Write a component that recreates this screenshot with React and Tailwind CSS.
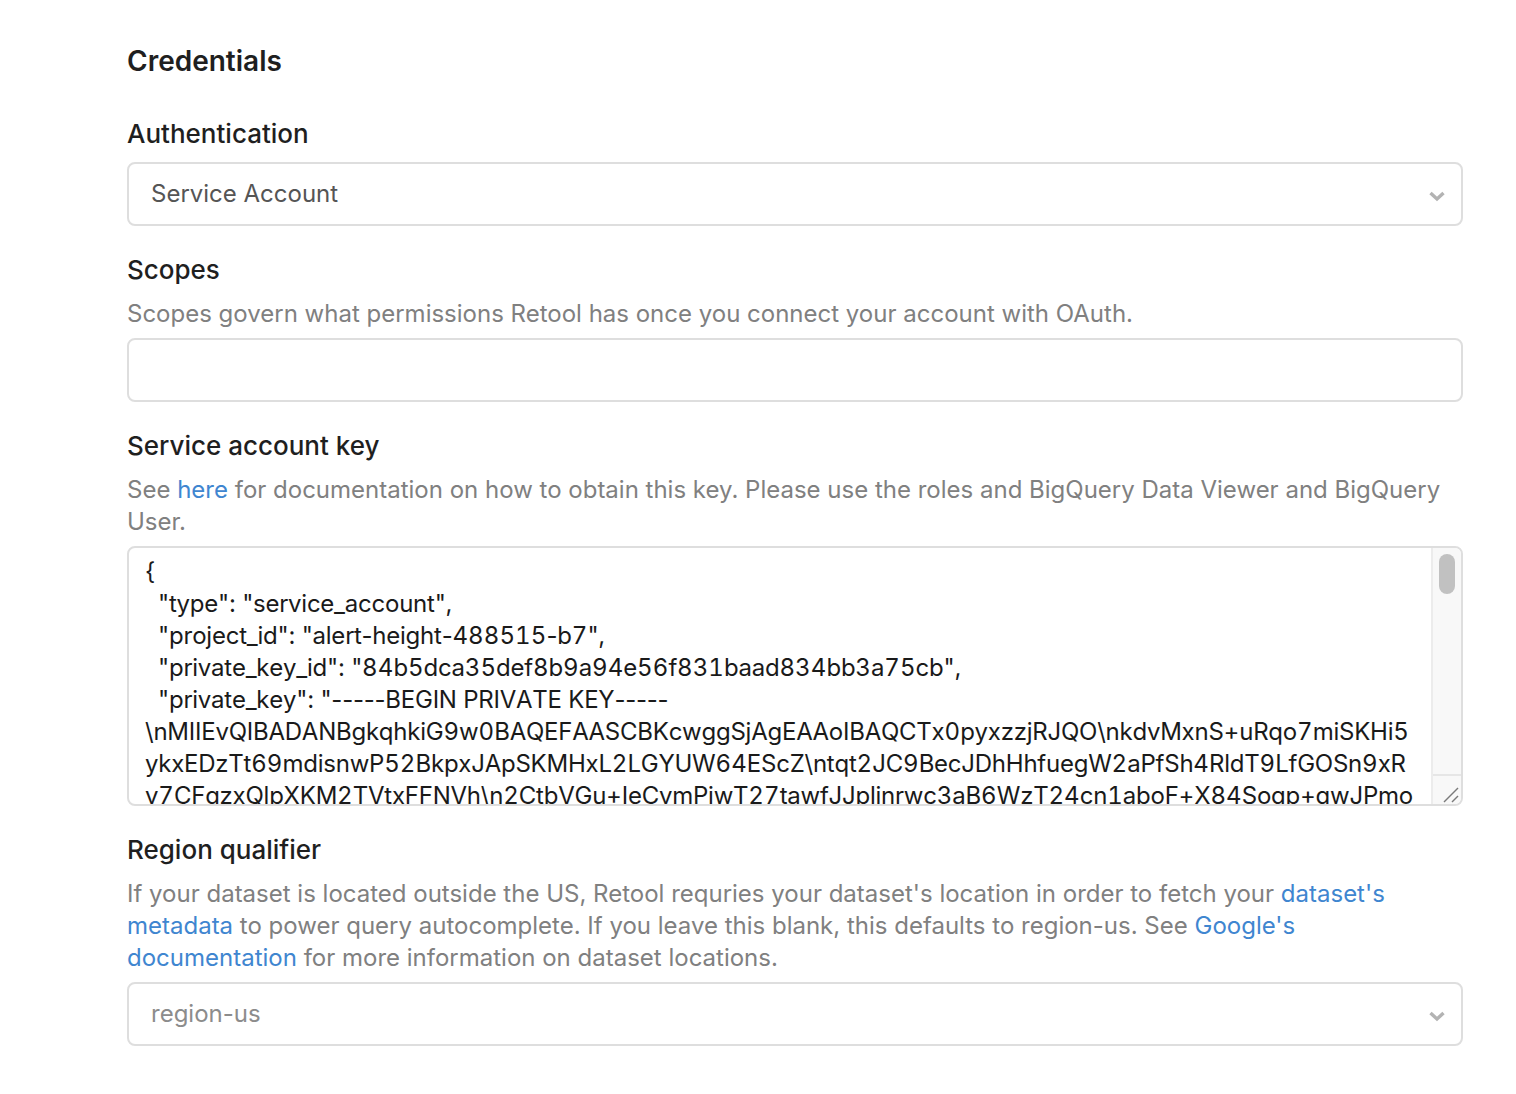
import React from "react";

const keyLines = [
  "{",
  '  "type": "service_account",',
  '  "project_id": "alert-height-488515-b7",',
  '  "private_key_id": "84b5dca35def8b9a94e56f831baad834bb3a75cb",',
  '  "private_key": "-----BEGIN PRIVATE KEY-----',
  "\\nMIIEvQIBADANBgkqhkiG9w0BAQEFAASCBKcwggSjAgEAAoIBAQCTx0pyxzzjRJQO\\nkdvMxnS+uRqo7miSKHi5",
  "ykxEDzTt69mdisnwP52BkpxJApSKMHxL2LGYUW64EScZ\\ntqt2JC9BecJDhHhfuegW2aPfSh4RldT9LfGOSn9xR",
  "v7CFqzxQlpXKM2TVtxFFNVh\\n2CtbVGu+IeCvmPjwT27tawfJJplinrwc3aB6WzT24cn1aboF+X84Soqp+qwJPmo",
];

// digits in the key are wider than the rest of the text
const KeyLine = ({ line }) => (
  <div className="whitespace-pre tracking-[-0.24px] [font-kerning:none]">
    {line.split(/(\d+)/).map((part, i) =>
      i % 2 ? (
        <span key={i} className="tabular-nums tracking-[0.1px]">{part}</span>
      ) : (
        part
      )
    )}
  </div>
);

const Select = ({ value, muted }) => (
  <div className="flex h-[64px] items-center justify-between rounded-[8px] border-2 border-[#dedede] pl-[22px] pr-[16px]">
    <span className={muted ? "text-[#8c8c8c]" : "text-[#555555]"}>{value}</span>
    <svg className="mt-[4px]" width="16" height="11" viewBox="0 0 16 11" fill="none" stroke="#b3b3b3" strokeWidth="3.4">
      <path d="M1.5 2 L8 8 L14.5 2" />
    </svg>
  </div>
);

const Label = ({ children }) => (
  <div className="text-[26px] leading-[32px] font-[450] text-[#1f1f1f]">{children}</div>
);

const Help = ({ children }) => (
  <div className="text-[24px] leading-[32px] text-[#808080]">{children}</div>
);

const A = ({ children }) => <a className="text-[#3f86d0]">{children}</a>;

export default function App() {
  return (
    <div className="min-h-[1094px] bg-white pl-[127px] pr-[53px] pt-[45px] font-['Inter',sans-serif] text-[24px] leading-[32px]">
      <h1 className="text-[28px] leading-[32px] font-semibold text-[#1f1f1f]">Credentials</h1>

      <div className="mt-[41px]">
        <Label>Authentication</Label>
        <div className="mt-[12px]">
          <Select value="Service Account" />
        </div>
      </div>

      <div className="mt-[28px]">
        <Label>Scopes</Label>
        <div className="mt-[12px]">
          <Help>Scopes govern what permissions Retool has once you connect your account with OAuth.</Help>
        </div>
        <div className="mt-[8px] h-[64px] rounded-[8px] border-2 border-[#dedede]" />
      </div>

      <div className="mt-[28px]">
        <Label>Service account key</Label>
        <div className="mt-[12px]">
          <Help>
            See <A>here</A> for documentation on how to obtain this key. Please use the roles and BigQuery Data Viewer and BigQuery User.
          </Help>
        </div>
        <div className="relative mt-[8px] flex h-[260px] overflow-hidden rounded-[8px] border-2 border-[#dedede]">
          <div className="min-w-0 flex-1 overflow-hidden pl-[16px] pt-[8px] text-[#1a1a1a]">
            {keyLines.map((line, i) => (
              <KeyLine key={i} line={line} />
            ))}
          </div>
          <div className="flex w-[30px] shrink-0 flex-col border-l-2 border-[#ececec] bg-[#f8f8f8]">
            <div className="mx-auto mt-[6px] h-[40px] w-[16px] rounded-full bg-[#c1c1c1]" />
            <div className="mt-auto flex h-[30px] items-end justify-end border-t-2 border-[#e6e6e6]">
              <svg width="20" height="20" viewBox="0 0 20 20" fill="none" stroke="#7a7a7a" strokeWidth="1.5">
                <path d="M3 18 L17 4" />
                <path d="M11 18 L17 12" />
              </svg>
            </div>
          </div>
        </div>
      </div>

      <div className="mt-[28px]">
        <Label>Region qualifier</Label>
        <div className="mt-[12px]">
          <Help>
            If your dataset is located outside the US, Retool requries your dataset's location in order to fetch your <A>dataset's metadata</A> to power query autocomplete. If you leave this blank, this defaults to region-us. See <A>Google's documentation</A> for more information on dataset locations.
          </Help>
        </div>
        <div className="mt-[8px]">
          <Select value="region-us" muted />
        </div>
      </div>
    </div>
  );
}
